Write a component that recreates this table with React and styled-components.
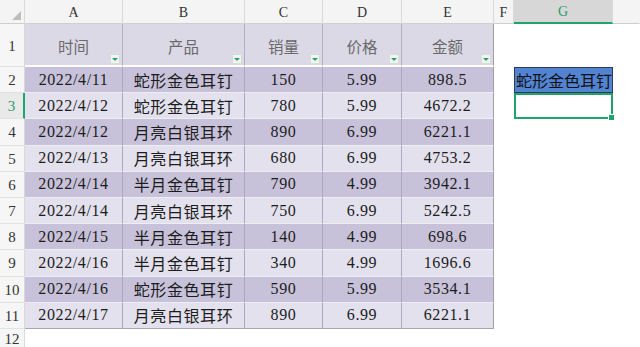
import React from "react";
import styled, { createGlobalStyle } from "styled-components";

const GlobalStyle = createGlobalStyle`
  html, body {
    margin: 0;
    padding: 0;
    background: #ffffff;
    overflow: hidden;
  }
`;

const columns = ["A", "B", "C", "D", "E", "F", "G"];
const headers = ["时间", "产品", "销量", "价格", "金额"];

const rows = [
  ["2022/4/11", "蛇形金色耳钉", "150", "5.99", "898.5"],
  ["2022/4/12", "蛇形金色耳钉", "780", "5.99", "4672.2"],
  ["2022/4/12", "月亮白银耳环", "890", "6.99", "6221.1"],
  ["2022/4/13", "月亮白银耳环", "680", "6.99", "4753.2"],
  ["2022/4/14", "半月金色耳钉", "790", "4.99", "3942.1"],
  ["2022/4/14", "月亮白银耳环", "750", "6.99", "5242.5"],
  ["2022/4/15", "半月金色耳钉", "140", "4.99", "698.6"],
  ["2022/4/16", "半月金色耳钉", "340", "4.99", "1696.6"],
  ["2022/4/16", "蛇形金色耳钉", "590", "5.99", "3534.1"],
  ["2022/4/17", "月亮白银耳环", "890", "6.99", "6221.1"],
];

function App() {
  return (
    <>
      <GlobalStyle />
      <Sheet>
        {/* column letters */}
        <Corner>
          <CornerMark />
        </Corner>
        {columns.map((c) => (
          <ColHead key={c} $active={c === "G"}>
            {c}
          </ColHead>
        ))}
        <ColHead $fill />

        {/* header row */}
        <RowHead>1</RowHead>
        {headers.map((h, i) => (
          <HeadCell key={h} $last={i === headers.length - 1}>
            {h}
            <FilterBtn />
          </HeadCell>
        ))}
        <Blank />
        <Blank />
        <Blank />

        {/* data rows */}
        {rows.map((r, i) => (
          <React.Fragment key={i}>
            <RowHead $active={i === 1}>{i + 2}</RowHead>
            {r.map((v, j) => (
              <DataCell
                key={j}
                $dark={i % 2 === 0}
                $last={j === r.length - 1}
                $bottom={i === rows.length - 1}
              >
                {v}
              </DataCell>
            ))}
            <Blank />
            {i === 0 ? (
              <BlueCell>蛇形金色耳钉</BlueCell>
            ) : i === 1 ? (
              <ActiveCell>
                <FillHandle />
              </ActiveCell>
            ) : (
              <Blank />
            )}
            <Blank />
          </React.Fragment>
        ))}

        <RowHead>12</RowHead>
      </Sheet>
    </>
  );
}

export default App;

const Sheet = styled.div`
  display: grid;
  grid-template-columns: 25px 98px 122px 78px 79px 92px 20px 99px 1fr;
  grid-template-rows: 24px 43px repeat(10, 26.2px) 1fr;
  width: 640px;
  height: 347px;
  background: #ffffff;
  font-family: "Liberation Serif", "Noto Sans CJK SC", serif;
`;

const Corner = styled.div`
  position: relative;
  background: #f4f4f4;
  border-right: 1px solid #d9d9d9;
  border-bottom: 1px solid #cfcfcf;
`;

const CornerMark = styled.span`
  position: absolute;
  right: 3px;
  bottom: 3px;
  width: 0;
  height: 0;
  border-left: 9px solid transparent;
  border-bottom: 9px solid #bdbdbd;
`;

const ColHead = styled.div`
  display: flex;
  align-items: flex-end;
  justify-content: ${(p) => (p.$fill ? "flex-start" : "center")};
  padding-bottom: 2px;
  box-sizing: border-box;
  font-size: 14px;
  color: ${(p) => (p.$active ? "#2a9c6c" : "#333333")};
  background: ${(p) => (p.$active ? "#d7d7d7" : "#f4f4f4")};
  border-right: 1px solid ${(p) => (p.$fill ? "transparent" : "#d9d9d9")};
  border-bottom: ${(p) => (p.$active ? "2px solid #21a36e" : "1px solid #cfcfcf")};
  margin-top: ${(p) => (p.$active ? "0" : "0")};
`;

const RowHead = styled.div`
  display: flex;
  align-items: center;
  justify-content: center;
  box-sizing: border-box;
  font-size: 15px;
  color: ${(p) => (p.$active ? "#2a9c6c" : "#333333")};
  background: ${(p) => (p.$active ? "#e9e9e9" : "#f6f6f6")};
  border-right: ${(p) => (p.$active ? "2px solid #21a36e" : "1px solid #d9d9d9")};
  border-bottom: 1px solid #e2e2e2;
  padding-top: 2px;
`;

const HeadCell = styled.div`
  position: relative;
  display: flex;
  align-items: center;
  justify-content: center;
  box-sizing: border-box;
  padding-top: 2px;
  font-size: 15.5px;
  color: #6a6a6a;
  background: #dcd9e7;
  border-right: 1px solid ${(p) => (p.$last ? "#9f9cae" : "#b4b0c4")};
  border-bottom: 2px solid #ffffff;
`;

const FilterBtn = styled.span`
  position: absolute;
  right: 2px;
  bottom: 1px;
  width: 10px;
  height: 10px;
  box-sizing: border-box;
  background: #f1f5f2;
  border: 1px solid #d6ddd8;
  display: flex;
  align-items: center;
  justify-content: center;

  &::after {
    content: "";
    width: 0;
    height: 0;
    border-left: 3px solid transparent;
    border-right: 3px solid transparent;
    border-top: 3px solid #2e9e6e;
  }
`;

const DataCell = styled.div`
  display: flex;
  align-items: center;
  justify-content: center;
  box-sizing: border-box;
  font-size: 16px;
  letter-spacing: 0.6px;
  color: #1c1c1c;
  background: ${(p) => (p.$dark ? "#c7c2d9" : "#e3e1ed")};
  border-right: 1px solid ${(p) => (p.$last ? "#9f9cae" : "#aca8bf")};
  border-bottom: 1px solid ${(p) => (p.$bottom ? "#a9a6b6" : "#efedf4")};
`;

const Blank = styled.div`
  background: #ffffff;
`;

const BlueCell = styled.div`
  display: flex;
  align-items: center;
  box-sizing: border-box;
  padding-left: 1px;
  font-family: "Noto Sans CJK SC", sans-serif;
  font-size: 16px;
  color: #111111;
  background: #5284d2;
  border: 1px solid #2c3a55;
  white-space: nowrap;
  overflow: hidden;
`;

const ActiveCell = styled.div`
  position: relative;
  box-sizing: border-box;
  background: #ffffff;
  border: 2px solid #21a36e;
`;

const FillHandle = styled.span`
  position: absolute;
  right: -4px;
  bottom: -4px;
  width: 5px;
  height: 5px;
  background: #21a36e;
  border: 1px solid #ffffff;
`;
